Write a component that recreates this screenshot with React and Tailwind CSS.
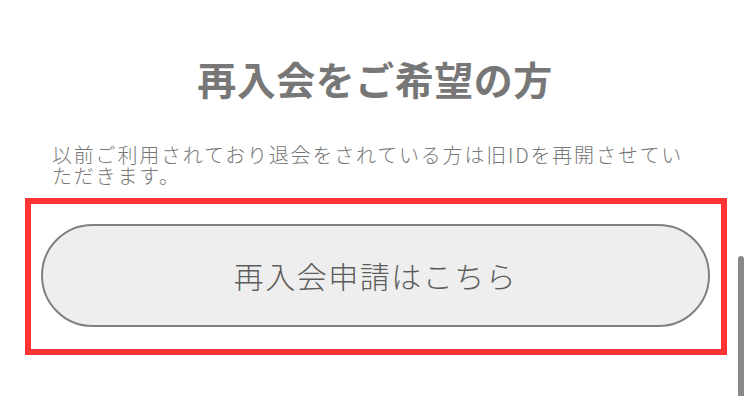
import React from 'react';

export default function App() {
  return (
    <div
      className="relative w-[750px] h-[396px] overflow-hidden bg-white"
      style={{ fontFamily: '"Noto Sans CJK JP", "Noto Sans", sans-serif' }}
    >
      <div className="pt-[58px]">
        <h2 className="text-center text-[39px] leading-[40px] font-bold text-[#777777] tracking-[0.5px]">
          再入会をご希望の方
        </h2>

        <p className="mt-[46px] pl-[52px] pr-[46px] text-[20px] leading-[21px] tracking-[1.8px] font-light text-[#777777]">
          以前ご利用されており退会をされている方は旧IDを再開させていただきます。
        </p>

        {/* 赤枠で囲まれたボタン */}
        <div className="mt-[12px] ml-[25px] w-[702px] h-[157px] border-[6px] border-[#ff3333] pt-[20px] pl-[10px] pr-[11px]">
          <button className="w-full h-[103px] rounded-full border-2 border-[#808080] bg-[#eeeeee] text-[30px] tracking-[1.5px] font-light text-[#5c5c5c]">
            再入会申請はこちら
          </button>
        </div>
      </div>

      {/* スクロールバー */}
      <div className="absolute left-[738px] top-[256px] w-[6px] h-[160px] rounded-full bg-[#888888]" />
    </div>
  );
}
